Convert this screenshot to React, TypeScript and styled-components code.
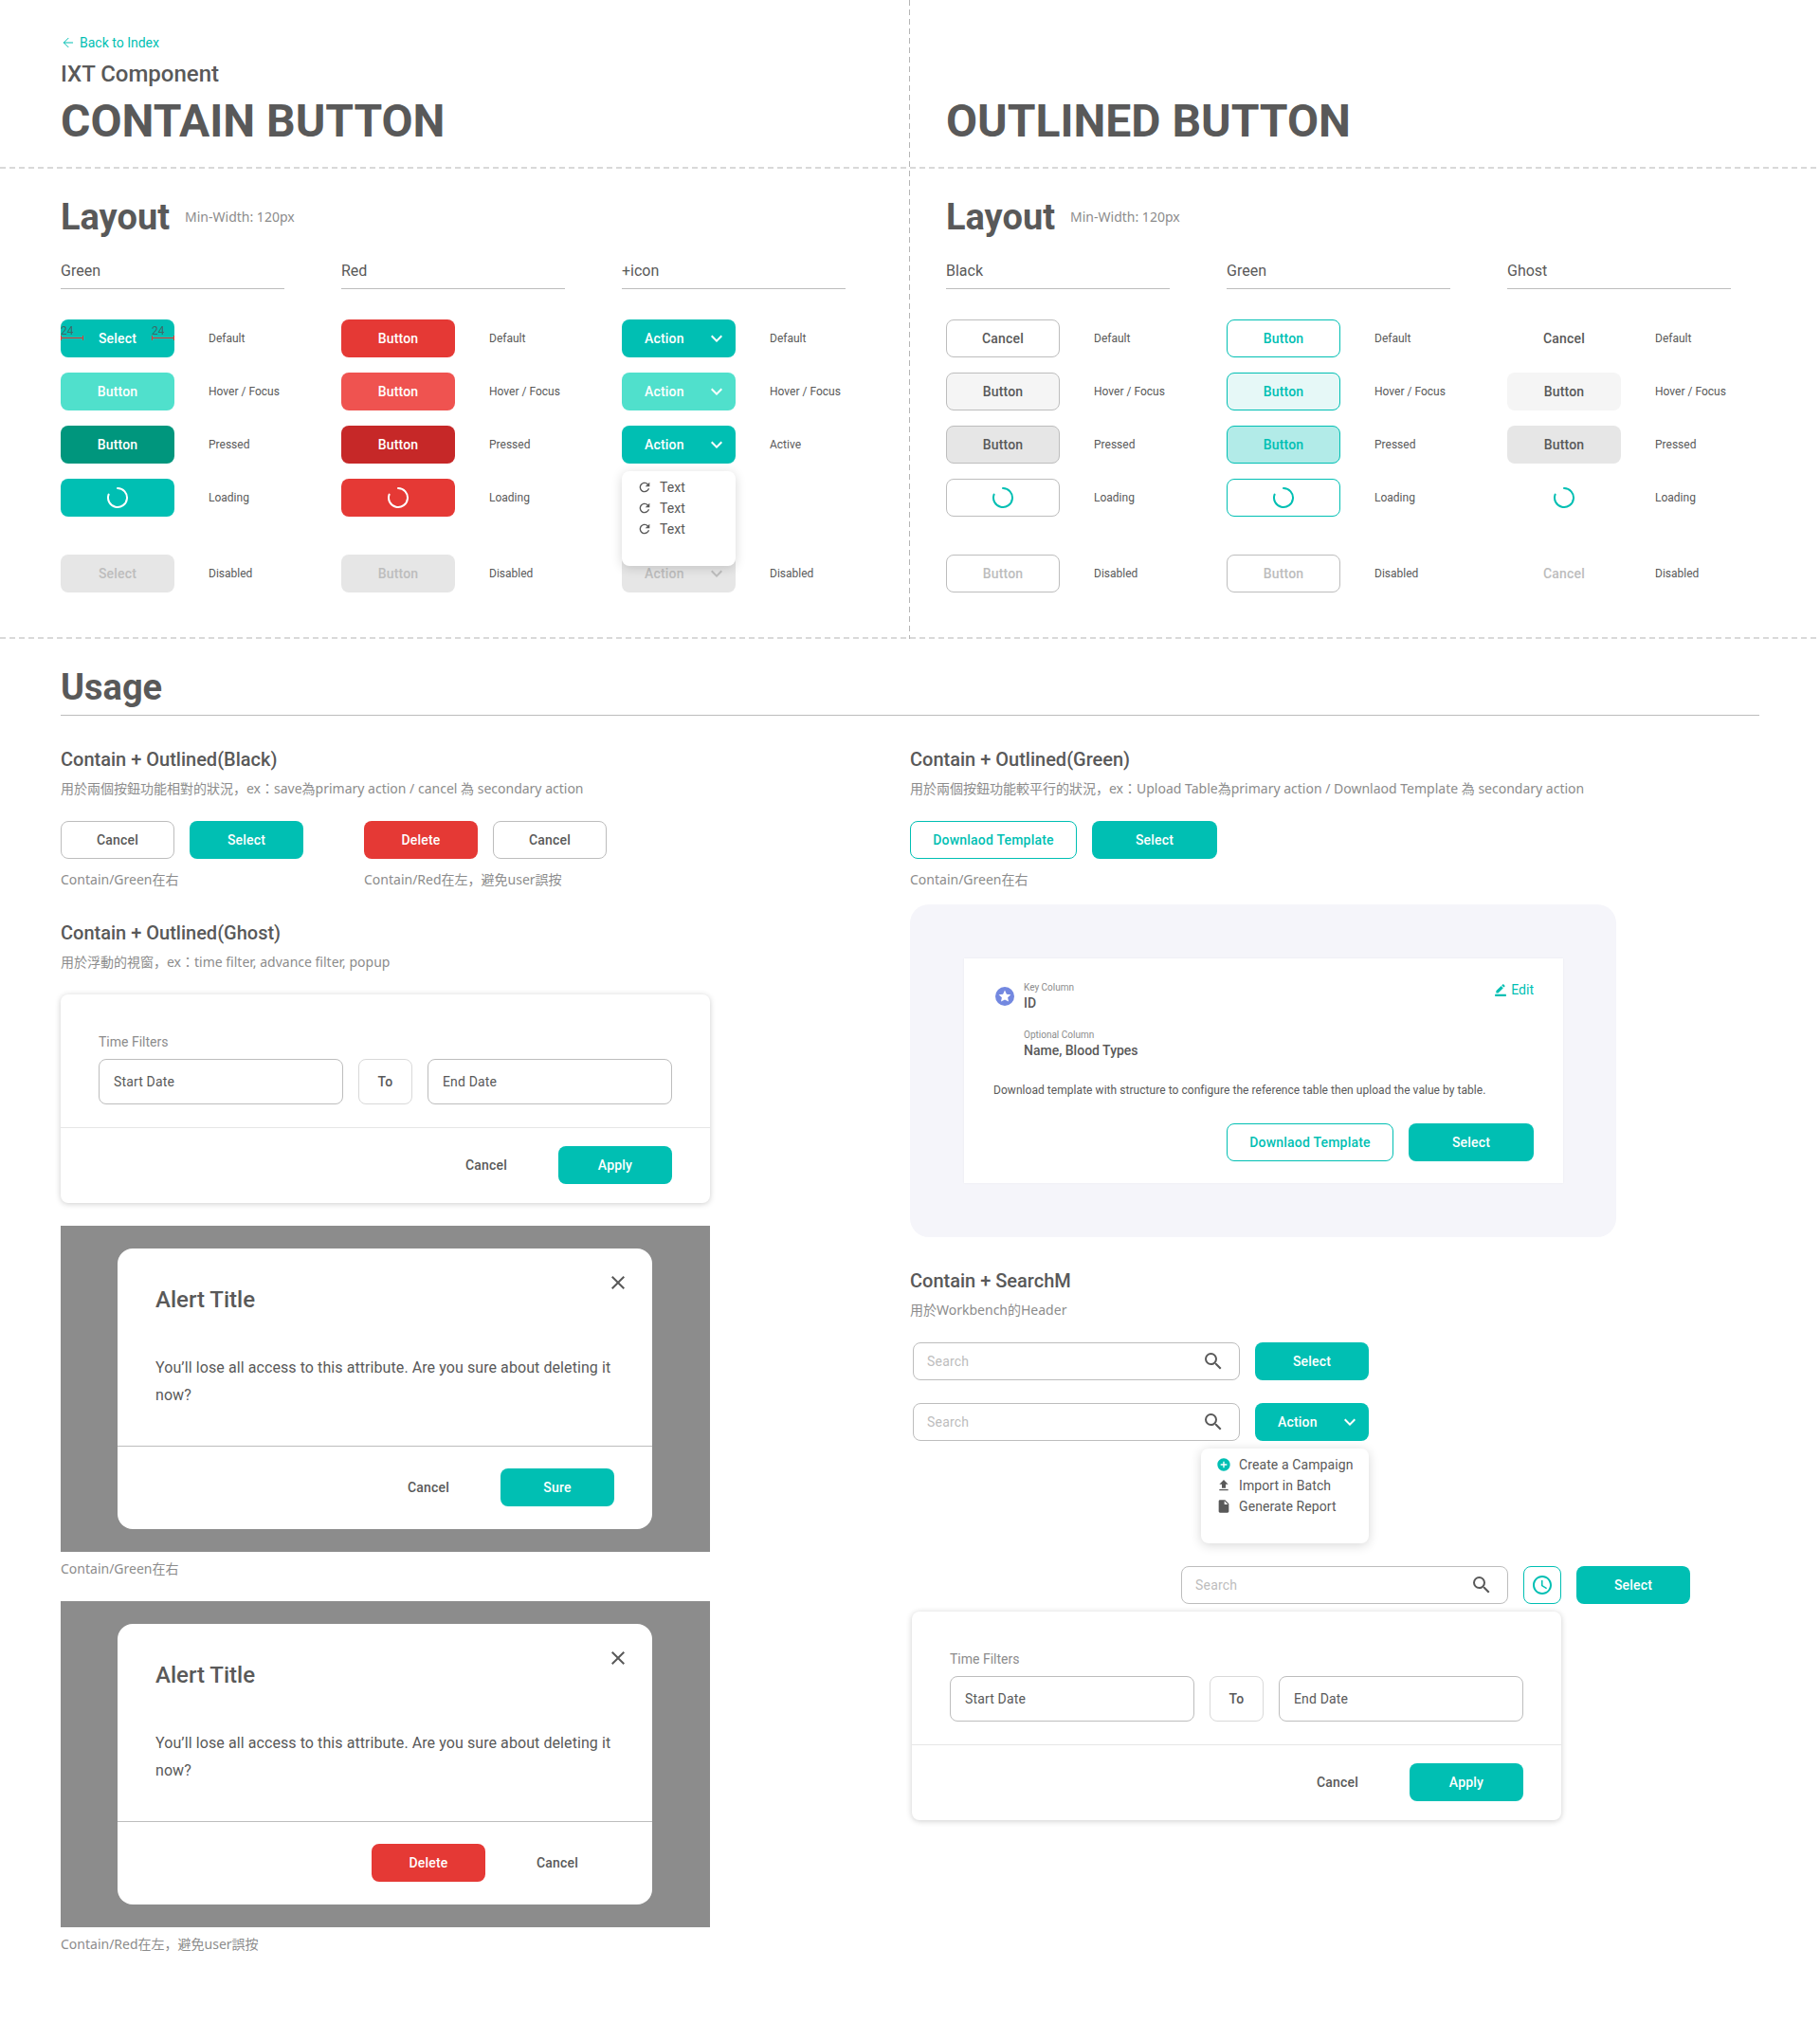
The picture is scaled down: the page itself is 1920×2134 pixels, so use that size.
import React from 'react';
import styled, { createGlobalStyle, css } from 'styled-components';
import { ArrowLeft } from 'lucide-react';
import {
  MdRefresh, MdSearch, MdKeyboardArrowDown, MdAddCircle, MdFileUpload,
  MdInsertDriveFile, MdBorderColor, MdAccessTime, MdClose,
} from 'react-icons/md';

const TEAL = '#00bfb3';
const RED = '#e53935';
const TEXT = '#595959';
const LINE = '#bdbdbd';
const MUTED = '#8c8c8c';
const DASH = '#d9d9d9';
const CJK = `"Noto Sans", "Noto Sans CJK JP", sans-serif`;

const Global = createGlobalStyle`
  html, body { margin: 0; padding: 0; background: #fff; }
  body {
    font-family: Roboto, "Noto Sans CJK JP", sans-serif;
    color: ${TEXT};
  }
  * { box-sizing: border-box; }
`;

const dashX = css`
  background-image: repeating-linear-gradient(90deg, ${DASH} 0 6px, transparent 6px 10px);
  background-size: 100% 2px;
  background-position: left bottom;
  background-repeat: no-repeat;
`;

const Page = styled.div`
  width: 1920px;
  min-height: 2134px;
  background: #fff;
`;

const Top = styled.div`
  display: grid;
  grid-template-columns: 960px 960px;
  height: 674px;
  ${dashX}
`;

const Half = styled.section<{ $left?: boolean }>`
  display: flex;
  flex-direction: column;
  ${p => p.$left && css`
    background-image: repeating-linear-gradient(180deg, #b5b5b5 0 6px, transparent 6px 10px);
    background-size: 1px 100%;
    background-position: right top;
    background-repeat: no-repeat;
  `}
`;

const Head = styled.header<{ $inset: number }>`
  height: 178px;
  display: flex;
  flex-direction: column;
  justify-content: flex-end;
  padding: 0 0 22px ${p => p.$inset}px;
  ${dashX}
`;

const Back = styled.a`
  display: flex;
  align-items: center;
  gap: 4px;
  font-size: 14px;
  line-height: 20px;
  color: ${TEAL};
  margin-bottom: 7px;
`;

const Kicker = styled.div`
  font-size: 24px;
  line-height: 32px;
  font-weight: 500;
  margin-bottom: 6px;
`;

const Title = styled.h1`
  margin: 0;
  font-size: 48px;
  line-height: 56px;
  font-weight: 700;
`;

const LayoutBody = styled.div<{ $inset: number }>`
  padding: 27px 0 0 ${p => p.$inset}px;
`;

const LayoutTitle = styled.div`
  display: flex;
  align-items: center;
  gap: 16px;
  height: 48px;
  margin-bottom: 20px;
`;

const LayoutHeading = styled.h2`
  margin: 0;
  font-size: 38px;
  line-height: 48px;
  font-weight: 700;
`;

const Note = styled.span`
  font-family: ${CJK};
  font-size: 14px;
  color: ${MUTED};
  margin-top: -2px;
`;

const Columns = styled.div`
  display: flex;
  gap: 60px;
`;

const Column = styled.div`
  width: 236px;
`;

const ColumnHead = styled.div`
  font-size: 16px;
  line-height: 24px;
  height: 32px;
  padding: 1px 0 7px;
  border-bottom: 1px solid ${LINE};
  margin-bottom: 32px;
`;

const Rows = styled.div`
  display: flex;
  flex-direction: column;
  gap: 16px;
`;

const Row = styled.div<{ $gapped?: boolean }>`
  display: flex;
  align-items: center;
  gap: 36px;
  height: 40px;
  position: relative;
  ${p => p.$gapped && css`margin-top: 24px;`}
`;

const StateLabel = styled.span`
  font-size: 12px;
  line-height: 16px;
  white-space: nowrap;
`;

type Tone =
  | 'green' | 'greenHover' | 'greenPressed'
  | 'red' | 'redHover' | 'redPressed' | 'off'
  | 'line' | 'lineHover' | 'linePressed' | 'lineOff'
  | 'teal' | 'tealHover' | 'tealPressed'
  | 'ghost' | 'ghostHover' | 'ghostPressed' | 'ghostOff';

const tones: Record<Tone, ReturnType<typeof css>> = {
  green: css`background: ${TEAL}; color: #fff;`,
  greenHover: css`background: #50e0cc; color: #fff;`,
  greenPressed: css`background: #00967d; color: #fff;`,
  red: css`background: ${RED}; color: #fff;`,
  redHover: css`background: #ef5350; color: #fff;`,
  redPressed: css`background: #c62828; color: #fff;`,
  off: css`background: #e6e6e6; color: #bdbdbd;`,
  line: css`background: #fff; color: ${TEXT}; border: 1px solid ${LINE};`,
  lineHover: css`background: #f5f5f5; color: ${TEXT}; border: 1px solid ${LINE};`,
  linePressed: css`background: #e6e6e6; color: ${TEXT}; border: 1px solid ${LINE};`,
  lineOff: css`background: #fff; color: #bdbdbd; border: 1px solid ${LINE};`,
  teal: css`background: #fff; color: ${TEAL}; border: 1px solid ${TEAL};`,
  tealHover: css`background: #e6f8f7; color: ${TEAL}; border: 1px solid ${TEAL};`,
  tealPressed: css`background: #b2ebe8; color: ${TEAL}; border: 1px solid ${TEAL};`,
  ghost: css`background: transparent; color: ${TEXT};`,
  ghostHover: css`background: #f5f5f5; color: ${TEXT};`,
  ghostPressed: css`background: #e6e6e6; color: ${TEXT};`,
  ghostOff: css`background: transparent; color: #bdbdbd;`,
};

const Btn = styled.button<{ $tone: Tone; $width?: number; $split?: boolean }>`
  flex: none;
  position: relative;
  width: ${p => p.$width ?? 120}px;
  height: 40px;
  border: 0;
  border-radius: 8px;
  font-family: Roboto, sans-serif;
  font-size: 14px;
  font-weight: 500;
  letter-spacing: 0.2px;
  display: flex;
  align-items: center;
  justify-content: ${p => (p.$split ? 'space-between' : 'center')};
  padding: ${p => (p.$split ? '0 8px 0 24px' : '0')};
  ${p => tones[p.$tone]}
`;

const Measure = styled.span<{ $right?: boolean }>`
  position: absolute;
  top: 19px;
  ${p => (p.$right ? 'right: 0;' : 'left: 0;')}
  width: 24px;
  height: 1px;
  background: ${RED};
  &::before, &::after {
    content: '';
    position: absolute;
    top: -2px;
    width: 1px;
    height: 5px;
    background: ${RED};
  }
  &::before { left: 0; }
  &::after { right: 0; }
`;

const MeasureText = styled.span`
  position: absolute;
  left: 0;
  top: -14px;
  font-size: 12px;
  line-height: 14px;
  font-weight: 400;
  letter-spacing: 0;
  color: #3d6b68;
`;

const Menu = styled.div<{ $width: number }>`
  position: absolute;
  top: 48px;
  right: 0;
  z-index: 2;
  width: ${p => p.$width}px;
  height: 100px;
  padding: 6px 16px;
  background: #fff;
  border-radius: 8px;
  box-shadow: 0 2px 12px rgba(0, 0, 0, 0.16);
`;

const MenuItem = styled.div`
  display: flex;
  align-items: center;
  gap: 8px;
  height: 22px;
  font-size: 14px;
  line-height: 22px;
  white-space: nowrap;
  color: ${TEXT};
  letter-spacing: 0.1px;
`;

const MenuIcon = styled.span<{ $teal?: boolean }>`
  display: flex;
  width: 16px;
  justify-content: center;
  color: ${p => (p.$teal ? TEAL : TEXT)};
`;

const ActionHolder = styled.div`
  position: relative;
  flex: none;
  width: 120px;
  height: 40px;
`;

const Spin = ({ color }: { color: string }) => (
  <svg width="24" height="24" viewBox="0 0 24 24" fill="none">
    <path d="M12 2 A10 10 0 1 1 2.6 8.6" stroke={color} strokeWidth="2" strokeLinecap="round" />
  </svg>
);

const Usage = styled.div`
  padding: 0 64px;
`;

const UsageHeading = styled.h2`
  margin: 29px 0 0;
  font-size: 38px;
  line-height: 44px;
  height: 52px;
  font-weight: 700;
  border-bottom: 1px solid ${LINE};
`;

const UsageGrid = styled.div`
  display: grid;
  grid-template-columns: 896px 1fr;
`;

const UsageCol = styled.div`
  padding-top: 32px;
`;

const GroupTitle = styled.h3<{ $spaced?: boolean }>`
  margin: ${p => (p.$spaced ? '32px' : '0')} 0 7px;
  font-size: 20px;
  line-height: 28px;
  font-weight: 500;
`;

const Desc = styled.p`
  margin: 0 0 24px;
  font-family: ${CJK};
  font-size: 14px;
  line-height: 20px;
  color: ${MUTED};
`;

const Caption = styled.div<{ $gap?: number }>`
  font-family: ${CJK};
  font-size: 14px;
  line-height: 20px;
  color: ${MUTED};
  margin-top: ${p => p.$gap ?? 12}px;
`;

const Pairs = styled.div`
  display: flex;
  gap: 64px;
`;

const ButtonPair = styled.div`
  display: flex;
  gap: 16px;
`;

const FilterCard = styled.div<{ $top: number; $inset?: number }>`
  width: 685px;
  height: 220px;
  margin-top: ${p => p.$top}px;
  margin-left: ${p => p.$inset ?? 0}px;
  background: #fff;
  border-radius: 8px;
  box-shadow: 0 1px 6px rgba(0, 0, 0, 0.2);
  padding-top: 40px;
`;

const FilterLabel = styled.div`
  font-size: 14px;
  line-height: 20px;
  color: ${MUTED};
  margin: 0 40px 8px;
`;

const FilterFields = styled.div`
  display: grid;
  grid-template-columns: 1fr 57px 1fr;
  gap: 16px;
  padding: 0 40px 24px;
  border-bottom: 1px solid #e6e6e6;
`;

const Field = styled.div<{ $center?: boolean }>`
  height: 48px;
  display: flex;
  align-items: center;
  justify-content: ${p => (p.$center ? 'center' : 'flex-start')};
  padding: ${p => (p.$center ? '0' : '0 15px')};
  border: 1px solid ${p => (p.$center ? '#d9d9d9' : LINE)};
  border-radius: 8px;
  font-size: 14px;
  font-weight: ${p => (p.$center ? 500 : 400)};
  letter-spacing: 0.15px;
`;

const Footer = styled.div<{ $pad: string; $line?: boolean }>`
  display: flex;
  justify-content: flex-end;
  gap: 16px;
  padding: ${p => p.$pad};
  ${p => p.$line && css`border-top: 1px solid ${LINE};`}
`;

const Backdrop = styled.div<{ $top: number }>`
  width: 685px;
  height: 344px;
  margin-top: ${p => p.$top}px;
  padding: 24px 61px 24px 60px;
  background: #8c8c8c;
`;

const Modal = styled.div`
  position: relative;
  height: 296px;
  background: #fff;
  border-radius: 16px;
  display: flex;
  flex-direction: column;
`;

const ModalClose = styled.span`
  position: absolute;
  top: 24px;
  right: 24px;
  display: flex;
  color: ${TEXT};
`;

const ModalBody = styled.div`
  flex: 1;
  padding: 36px 40px 0;
`;

const ModalTitle = styled.div`
  font-size: 24px;
  line-height: 36px;
  font-weight: 500;
  margin-bottom: 39px;
`;

const ModalText = styled.p`
  margin: 0;
  font-size: 16px;
  line-height: 29px;
  letter-spacing: 0.08px;
`;

const GreyPanel = styled.div`
  width: 745px;
  height: 351px;
  margin-top: 16px;
  padding: 57px;
  background: #f5f5fa;
  border-radius: 20px;
`;

const TemplateCard = styled.div`
  position: relative;
  width: 632px;
  height: 237px;
  padding: 25px 31px 0;
  background: #fff;
  box-shadow: 0 0 2px rgba(0, 0, 0, 0.06);
`;

const KeyRow = styled.div`
  display: flex;
  gap: 10px;
  padding-left: 2px;
`;

const Badge = styled.span`
  display: flex;
  width: 20px;
  margin-top: 5px;
`;

const KeyText = styled.div`
  display: flex;
  flex-direction: column;
`;

const TinyLabel = styled.span`
  font-size: 10px;
  line-height: 12px;
  color: ${MUTED};
  margin-bottom: 2px;
`;

const KeyValue = styled.span`
  font-size: 14px;
  line-height: 16px;
  margin-bottom: 20px;
  font-weight: 500;
  color: ${TEXT};
`;

const EditLink = styled.span`
  position: absolute;
  top: 24px;
  right: 31px;
  display: flex;
  align-items: center;
  gap: 4px;
  font-size: 14px;
  line-height: 18px;
  color: ${TEAL};
`;

const TemplateText = styled.p`
  margin: 6px 0 27px;
  font-size: 12px;
  line-height: 16px;
  letter-spacing: 0.05px;
`;

const RightActions = styled.div`
  display: flex;
  justify-content: flex-end;
  gap: 16px;
`;

const SearchRow = styled.div<{ $inset?: number; $top?: number }>`
  display: flex;
  gap: 16px;
  margin-left: ${p => p.$inset ?? 3}px;
  margin-top: ${p => p.$top ?? 0}px;
`;

const SearchBox = styled.div`
  flex: none;
  width: 345px;
  height: 40px;
  display: flex;
  align-items: center;
  justify-content: space-between;
  padding: 0 15px 0 14px;
  border: 1px solid ${LINE};
  border-radius: 8px;
  font-size: 14px;
  color: #bdbdbd;
  letter-spacing: 0.2px;
`;

const SearchIcon = styled(MdSearch)`
  color: ${TEXT};
`;

const IconOnly = styled(Btn)`
  color: ${TEAL};
`;

const Chevron = () => <MdKeyboardArrowDown size={24} />;

const StarBadge = () => (
  <svg width="20" height="20" viewBox="0 0 20 20">
    <circle cx="10" cy="10" r="10" fill="#7388e0" />
    <path d="M10 3.6l1.9 4.1 4.5.5-3.3 3 .9 4.4L10 13.4l-4 2.2.9-4.4-3.3-3 4.5-.5z" fill="#fff" />
  </svg>
);

type RowDef = { tone: Tone; label: string; text?: string; spin?: boolean };

const contain = (base: 'green' | 'red', first: string, disabled: string): RowDef[] => [
  { tone: base, label: 'Default', text: first },
  { tone: `${base}Hover` as Tone, label: 'Hover / Focus', text: 'Button' },
  { tone: `${base}Pressed` as Tone, label: 'Pressed', text: 'Button' },
  { tone: base, label: 'Loading', spin: true },
  { tone: 'off', label: 'Disabled', text: disabled },
];

const outline = (a: Tone, b: Tone, c: Tone, off: Tone, first: string, disabled: string): RowDef[] => [
  { tone: a, label: 'Default', text: first },
  { tone: b, label: 'Hover / Focus', text: 'Button' },
  { tone: c, label: 'Pressed', text: 'Button' },
  { tone: a, label: 'Loading', spin: true },
  { tone: off, label: 'Disabled', text: disabled },
];

const StateColumn = ({ name, rows, measured }: { name: string; rows: RowDef[]; measured?: boolean }) => (
  <Column>
    <ColumnHead>{name}</ColumnHead>
    <Rows>
      {rows.map((r, i) => (
        <Row key={i} $gapped={i === 4}>
          <Btn $tone={r.tone}>
            {r.spin ? <Spin color={r.tone === 'green' || r.tone === 'red' ? '#fff' : TEAL} /> : r.text}
            {measured && i === 0 && (
              <>
                <Measure><MeasureText>24</MeasureText></Measure>
                <Measure $right><MeasureText>24</MeasureText></Measure>
              </>
            )}
          </Btn>
          <StateLabel>{r.label}</StateLabel>
        </Row>
      ))}
    </Rows>
  </Column>
);

const IconColumn = () => (
  <Column>
    <ColumnHead>+icon</ColumnHead>
    <Rows>
      <Row><Btn $tone="green" $split>Action<Chevron /></Btn><StateLabel>Default</StateLabel></Row>
      <Row><Btn $tone="greenHover" $split>Action<Chevron /></Btn><StateLabel>Hover / Focus</StateLabel></Row>
      <Row>
        <ActionHolder>
          <Btn $tone="green" $split>Action<Chevron /></Btn>
          <Menu $width={120}>
            {[0, 1, 2].map(i => (
              <MenuItem key={i}>
                <MenuIcon><MdRefresh size={16} /></MenuIcon>
                Text
              </MenuItem>
            ))}
          </Menu>
        </ActionHolder>
        <StateLabel>Active</StateLabel>
      </Row>
      <Row />
      <Row $gapped><Btn $tone="off" $split>Action<Chevron /></Btn><StateLabel>Disabled</StateLabel></Row>
    </Rows>
  </Column>
);

const TimeFilter = ({ top, inset }: { top: number; inset?: number }) => (
  <FilterCard $top={top} $inset={inset}>
    <FilterLabel>Time Filters</FilterLabel>
    <FilterFields>
      <Field>Start Date</Field>
      <Field $center>To</Field>
      <Field>End Date</Field>
    </FilterFields>
    <Footer $pad="19px 40px">
      <Btn $tone="ghost">Cancel</Btn>
      <Btn $tone="green">Apply</Btn>
    </Footer>
  </FilterCard>
);

const Alert = ({ top, children }: { top: number; children: React.ReactNode }) => (
  <Backdrop $top={top}>
    <Modal>
      <ModalClose><MdClose size={24} /></ModalClose>
      <ModalBody>
        <ModalTitle>Alert Title</ModalTitle>
        <ModalText>You’ll lose all access to this attribute. Are you sure about deleting it now?</ModalText>
      </ModalBody>
      <Footer $pad="23px 40px 24px" $line>{children}</Footer>
    </Modal>
  </Backdrop>
);

const Search = () => (
  <SearchBox>
    Search
    <SearchIcon size={24} />
  </SearchBox>
);

export default function App() {
  return (
    <Page>
      <Global />
      <Top>
        <Half $left>
          <Head $inset={64}>
            <Back><ArrowLeft size={16} strokeWidth={1.5} />Back to Index</Back>
            <Kicker>IXT Component</Kicker>
            <Title>CONTAIN BUTTON</Title>
          </Head>
          <LayoutBody $inset={64}>
            <LayoutTitle>
              <LayoutHeading>Layout</LayoutHeading>
              <Note>Min-Width: 120px</Note>
            </LayoutTitle>
            <Columns>
              <StateColumn name="Green" rows={contain('green', 'Select', 'Select')} measured />
              <StateColumn name="Red" rows={contain('red', 'Button', 'Button')} />
              <IconColumn />
            </Columns>
          </LayoutBody>
        </Half>
        <Half>
          <Head $inset={38}>
            <Title>OUTLINED BUTTON</Title>
          </Head>
          <LayoutBody $inset={38}>
            <LayoutTitle>
              <LayoutHeading>Layout</LayoutHeading>
              <Note>Min-Width: 120px</Note>
            </LayoutTitle>
            <Columns>
              <StateColumn name="Black" rows={outline('line', 'lineHover', 'linePressed', 'lineOff', 'Cancel', 'Button')} />
              <StateColumn name="Green" rows={outline('teal', 'tealHover', 'tealPressed', 'lineOff', 'Button', 'Button')} />
              <StateColumn name="Ghost" rows={outline('ghost', 'ghostHover', 'ghostPressed', 'ghostOff', 'Cancel', 'Cancel')} />
            </Columns>
          </LayoutBody>
        </Half>
      </Top>
      <Usage>
        <UsageHeading>Usage</UsageHeading>
        <UsageGrid>
          <UsageCol>
            <GroupTitle>Contain + Outlined(Black)</GroupTitle>
            <Desc>用於兩個按鈕功能相對的狀況，ex：save為primary action / cancel 為 secondary action</Desc>
            <Pairs>
              <div>
                <ButtonPair>
                  <Btn $tone="line">Cancel</Btn>
                  <Btn $tone="green">Select</Btn>
                </ButtonPair>
                <Caption>Contain/Green在右</Caption>
              </div>
              <div>
                <ButtonPair>
                  <Btn $tone="red">Delete</Btn>
                  <Btn $tone="line">Cancel</Btn>
                </ButtonPair>
                <Caption>Contain/Red在左，避免user誤按</Caption>
              </div>
            </Pairs>
            <GroupTitle $spaced>Contain + Outlined(Ghost)</GroupTitle>
            <Desc>用於浮動的視窗，ex：time filter, advance filter, popup</Desc>
            <TimeFilter top={0} />
            <Alert top={24}>
              <Btn $tone="ghost">Cancel</Btn>
              <Btn $tone="green">Sure</Btn>
            </Alert>
            <Caption $gap={8}>Contain/Green在右</Caption>
            <Alert top={24}>
              <Btn $tone="red">Delete</Btn>
              <Btn $tone="ghost">Cancel</Btn>
            </Alert>
            <Caption $gap={8}>Contain/Red在左，避免user誤按</Caption>
          </UsageCol>
          <UsageCol>
            <GroupTitle>Contain + Outlined(Green)</GroupTitle>
            <Desc>用於兩個按鈕功能較平行的狀況，ex：Upload Table為primary action / Downlaod Template 為 secondary action</Desc>
            <ButtonPair>
              <Btn $tone="teal" $width={176}>Downlaod Template</Btn>
              <Btn $tone="green" $width={132}>Select</Btn>
            </ButtonPair>
            <Caption>Contain/Green在右</Caption>
            <GreyPanel>
              <TemplateCard>
                <KeyRow>
                  <Badge><StarBadge /></Badge>
                  <KeyText>
                    <TinyLabel>Key Column</TinyLabel>
                    <KeyValue>ID</KeyValue>
                    <TinyLabel>Optional Column</TinyLabel>
                    <KeyValue>Name, Blood Types</KeyValue>
                  </KeyText>
                </KeyRow>
                <EditLink><MdBorderColor size={14} />Edit</EditLink>
                <TemplateText>Download template with structure to configure the reference table then upload the value by table.</TemplateText>
                <RightActions>
                  <Btn $tone="teal" $width={176}>Downlaod Template</Btn>
                  <Btn $tone="green" $width={132}>Select</Btn>
                </RightActions>
              </TemplateCard>
            </GreyPanel>
            <GroupTitle $spaced>Contain + SearchM</GroupTitle>
            <Desc>用於Workbench的Header</Desc>
            <SearchRow>
              <Search />
              <Btn $tone="green">Select</Btn>
            </SearchRow>
            <SearchRow $top={24}>
              <Search />
              <ActionHolder>
                <Btn $tone="green" $split>Action<Chevron /></Btn>
                <Menu $width={177}>
                  <MenuItem><MenuIcon $teal><MdAddCircle size={16} /></MenuIcon>Create a Campaign</MenuItem>
                  <MenuItem><MenuIcon><MdFileUpload size={16} /></MenuIcon>Import in Batch</MenuItem>
                  <MenuItem><MenuIcon><MdInsertDriveFile size={16} /></MenuIcon>Generate Report</MenuItem>
                </Menu>
              </ActionHolder>
            </SearchRow>
            <SearchRow $inset={286} $top={132}>
              <Search />
              <IconOnly $tone="teal" $width={40}><MdAccessTime size={24} /></IconOnly>
              <Btn $tone="green">Select</Btn>
            </SearchRow>
            <TimeFilter top={8} inset={2} />
          </UsageCol>
        </UsageGrid>
      </Usage>
    </Page>
  );
}
